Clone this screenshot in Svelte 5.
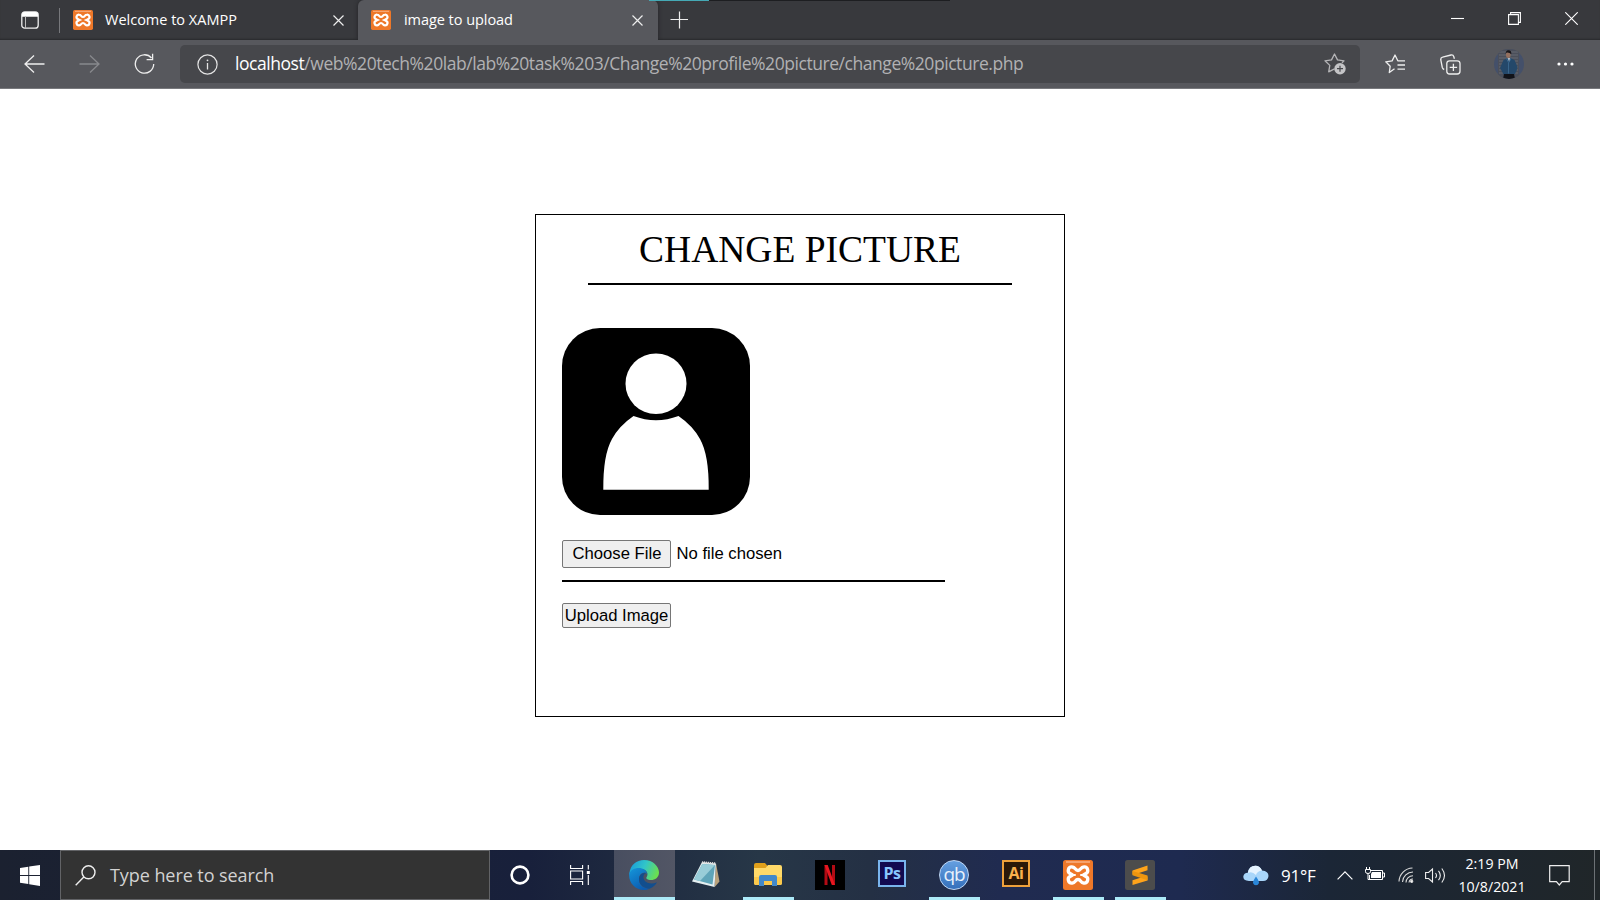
<script>
  const win = ['min', 'restore', 'close'];
  const apps = [
    { id: 'edge', state: 'active' },
    { id: 'note', state: '' },
    { id: 'files', state: 'open' },
    { id: 'netflix', state: '' },
    { id: 'ps', state: '' },
    { id: 'qb', state: 'open' },
    { id: 'ai', state: '' },
    { id: 'xampp', state: 'open' },
    { id: 'sublime', state: 'open' }
  ];
</script>

{#snippet xampp(size)}
  <svg width={size} height={size} viewBox="0 0 30 30">
    <rect width="30" height="30" rx="2.5" fill="#ee7829" />
    <path d="M3 2h24" stroke="#f9b58a" stroke-width="1.400" />
    <path d="M9.300 7C5 6.500 4 12 7 13.500L9.500 15L7 16.500C4 18 5 23.500 9.300 23C12.500 22.700 12 19.500 15 19.500C18 19.500 17.500 22.700 20.700 23C25 23.500 26 18 23 16.500L20.500 15L23 13.500C26 12 25 6.500 20.700 7C17.500 7.300 18 10.500 15 10.500C12 10.500 12.500 7.300 9.300 7Z" fill="none" stroke="#fff" stroke-width="3.300" stroke-linejoin="round" />
    <path d="M9 15h3M18 15h3" stroke="#fff" stroke-width="2" stroke-linecap="round" />
  </svg>
{/snippet}

<div class="screen">
  <header class="tabs">
    <span class="loadbar"><i></i></span>
    <svg class="tabmenu" width="18" height="18" viewBox="0 0 18 18"><rect x=".8" y=".8" width="16.400" height="16.400" rx="3" fill="none" stroke="#eee" stroke-width="1.300" /><path d="M1 5.800V3.500Q1 1 3.500 1h11Q17 1 17 3.500v2.300Z" fill="#fff" /><path d="M4.500 5v12" stroke="#bbb" /></svg>
    <span class="sep"></span>
    <div class="tab idle">
      {@render xampp(20)}
      <span class="title t1">Welcome to XAMPP</span>
      <svg class="x" width="11" height="11" viewBox="0 0 11 11"><path d="M.5.5l10 10M10.500.5l-10 10" stroke="#eee" stroke-width="1.200" /></svg>
    </div>
    <div class="tab live">
      {@render xampp(20)}
      <span class="title t2">image to upload</span>
      <svg class="x" width="11" height="11" viewBox="0 0 11 11"><path d="M.5.5l10 10M10.500.5l-10 10" stroke="#eee" stroke-width="1.200" /></svg>
    </div>
    <svg class="plus" width="18" height="18" viewBox="0 0 18 18"><path d="M9.500 .5v17M.5 8.500h18" stroke="#eee" stroke-width="1.200" /></svg>
    <div class="win">
      {#each win as w}
        <svg width="13" height="13" viewBox="0 0 13 13" fill="none" stroke="#fff" stroke-width="1.100">
          {#if w === 'min'}<path d="M0 6.500h13" />
          {:else if w === 'restore'}<path d="M.6 2.600h9.800v9.800H.6ZM2.600 2.600V.6h9.800v9.800h-2" />
          {:else}<path d="M.3.3l12.400 12.400M12.700.3L.3 12.700" />{/if}
        </svg>
      {/each}
    </div>
  </header>

  <nav class="toolbar">
    <svg class="back" width="21" height="20" viewBox="0 0 21 20"><path d="M10 1.500L1 10l9 8.500M1 10h19.500" fill="none" stroke="#eee" stroke-width="1.300" /></svg>
    <svg class="fwd" width="21" height="20" viewBox="0 0 21 20"><path d="M11 1.500l9 8.500-9 8.500M20 10H.5" fill="none" stroke="#88898d" stroke-width="1.300" /></svg>
    <svg class="reload" width="21" height="22" viewBox="0 0 21 22"><path d="M19.700 11A9.200 9.200 0 1 1 17.500 5M18.600.8v5.800h-6" fill="none" stroke="#eee" stroke-width="1.300" /></svg>
    <div class="url">
      <svg class="info" width="21" height="21" viewBox="0 0 21 21"><circle cx="10.500" cy="10.500" r="9.600" fill="none" stroke="#e5e5e5" stroke-width="1.200" /><path d="M10.500 9v6.500" stroke="#e5e5e5" stroke-width="1.300" /><circle cx="10.500" cy="6.300" r=".9" fill="#e5e5e5" /></svg>
      <span class="address"><b>localhost</b>/web%20tech%20lab/lab%20task%203/Change%20profile%20picture/change%20picture.php</span>
      <svg class="addfav" width="22" height="22" viewBox="0 0 22 22"><path d="M10.500 15.800l-5.800 3 1.100-6.400L1 7.800l6.500-.9L10.500 1l3 5.900 6.500.9-2 2" fill="none" stroke="#b5b5b7" stroke-width="1.300" stroke-linejoin="round" /><circle cx="16" cy="15.700" r="5.700" fill="#c4c4c6" /><path d="M16 12.700v6M13 15.700h6" stroke="#46474b" stroke-width="1.200" /></svg>
    </div>
    <svg class="fav" width="21" height="20" viewBox="0 0 21 20"><path d="M9.500 14.800l-5.200 3.700.9-6.300L.8 7.800l6.300-.9L10 1l2.800 5.800H20M12.500 11H20M12.500 15.200H20" fill="none" stroke="#eee" stroke-width="1.300" stroke-linejoin="round" /></svg>
    <svg class="coll" width="21" height="21" viewBox="0 0 21 21" fill="none" stroke="#eee" stroke-width="1.300"><path d="M4.200 15.500q-1.500-.4-1.900-2L.8 6q-.4-2.300 1.800-2.800L11 1q2.200-.4 2.800 1.700l.6 2" /><rect x="6.800" y="6.800" width="13.200" height="13.200" rx="2.800" /><path d="M13.400 9.700v7.400M9.700 13.400h7.400" /></svg>
    <svg class="avatar" width="30" height="30" viewBox="0 0 30 30"><defs><clipPath id="round"><circle cx="15" cy="15" r="15" /></clipPath></defs><g clip-path="url(#round)"><rect width="30" height="30" fill="#44506a" /><rect x="4" width="21" height="30" fill="#4b4f5a" /><path d="M5 3h19M5 6h19M5 9h19M5 12h19M5 15h19M5 18h19M5 21h19M5 24h19" stroke="#676a73" stroke-width="1" /><path d="M9.500 11l4-2h3l4 2 3 7-1 4-2 3.500H9.500l-1.500-3-2-3.500Z" fill="#24486a" /><path d="M12.500 9.500l2 4v11M17 9.500l-2 4" fill="none" stroke="#3f6d94" stroke-width=".8" /><path d="M13.500 9h2.800l-1.300 3.500Z" fill="#aebac6" /><path d="M10 25h10l1 5H9Z" fill="#111319" /><ellipse cx="14.300" cy="5.800" rx="2.300" ry="3.200" fill="#94705f" /><path d="M11.500 5q.3-4 3-3.800 3.200 0 2.800 4-2-2-5-1.500Z" fill="#171519" /></g></svg>
    <svg class="dots" width="17" height="4" viewBox="0 0 17 4" fill="#fff"><circle cx="2" cy="2" r="1.600" /><circle cx="8.500" cy="2" r="1.600" /><circle cx="15" cy="2" r="1.600" /></svg>
  </nav>

  <main>
    <section class="card">
      <h1>CHANGE PICTURE</h1>
      <div class="rule top"></div>
      <svg class="picture" width="188" height="187" viewBox="0 0 188 187"><rect width="188" height="187" rx="38" fill="#000" /><ellipse cx="94" cy="55.700" rx="30.500" ry="30.300" fill="#fff" /><path d="M71.500 88Q94 96.500 116.500 88Q131 98 138 111Q147 127 146.700 161.700H41.300Q41 127 50 111Q57 98 71.500 88Z" fill="#fff" /></svg>
      <div class="file"><button class="choose">Choose File</button><span>No file chosen</span></div>
      <div class="rule low"></div>
      <button class="upload">Upload Image</button>
    </section>
  </main>

  <footer>
    <div class="start"><svg width="20" height="21" viewBox="0 0 20 21" fill="#fff"><path d="M0 3l8.300-1.200v8.100H0ZM9.200 1.600L20 0v9.900H9.200ZM0 10.900h8.300V19L0 17.800ZM9.200 10.900H20V21L9.200 19.300Z" /></svg></div>
    <div class="search"><svg width="21" height="21" viewBox="0 0 21 21" fill="none" stroke="#eee" stroke-width="1.400"><circle cx="13.500" cy="7.300" r="6.500" /><path d="M8.800 12L.7 20.300" /></svg><span>Type here to search</span></div>
    <div class="sys"><svg width="20" height="20" viewBox="0 0 20 20"><circle cx="10" cy="10" r="8.400" fill="none" stroke="#fff" stroke-width="2.600" /></svg></div>
    <div class="sys view"><svg width="21" height="20" viewBox="0 0 21 20" fill="none" stroke="#fff" stroke-width="1.100"><path d="M.6 0v3.500h12V0M.6 20v-3.500h12V20M.6 6h12v8H.6ZM18.300 0v4.500M18.300 10v10" /><path d="M16.800 6h3v3h-3Z" fill="#fff" stroke="none" /></svg></div>
    {#each apps as app}
      <div class="app {app.state}">
        {#if app.id === 'edge'}
          <svg width="30" height="30" viewBox="0 0 30 30"><defs><linearGradient id="eg" x1="0" y1=".2" x2="1" y2=".5"><stop offset="0" stop-color="#199bdb" /><stop offset=".5" stop-color="#31c5c9" /><stop offset="1" stop-color="#6be04f" /></linearGradient><linearGradient id="eb" x1="0" y1="0" x2=".6" y2="1"><stop offset="0" stop-color="#1596da" /><stop offset="1" stop-color="#0b5bb0" /></linearGradient></defs><path d="M.4 13C1.500 5 7.500 0 15 0C24 0 30 6.500 30 12.500C30 17.500 26 20 22 20C18.500 20 16.700 18.600 17.500 17.300C20 14 18 9 11.500 9C6 9 2 12 .4 15Z" fill="url(#eg)" /><path d="M.2 14C1.500 10 5.500 8 9.500 8C14.500 8 17.800 10.500 18 14C16 11.500 10 13 10 19C10 25 15 29 21 28.500C19 29.500 17 30 15 30C6 30-.5 22.500.2 14Z" fill="url(#eb)" /><path d="M14 13.200C7.500 15.500 8.500 27.500 20.500 28.700C24 27.500 26.500 25 28 22.300C21 25.500 13.500 22 14.500 16Q15 13.500 17 13Q15.500 12.500 14 13.200Z" fill="#124e8e" /></svg>
        {:else if app.id === 'note'}
          <svg width="30" height="30" viewBox="0 0 30 30"><path d="M25 3.500l3.500 18-5 5.700Z" fill="#b9a27c" /><path d="M11 2l14 1.500-1.500 23.500L1 21.500Z" fill="#e4eef0" /><path d="M11.300 4L24 5l-2.500 19.500L3 19.500Z" fill="#5fa5b9" /><path d="M11.300 4L24 5 9 21 3 19.500Z" fill="#98cdd8" /><path d="M11 2.300l14 1.200" stroke="#ddd" stroke-width="2.200" stroke-dasharray="1.200 .8" /></svg>
        {:else if app.id === 'files'}
          <svg width="30" height="30" viewBox="0 0 30 30"><path d="M1 5q0-2 2-2h9l2.500 3-2 5H1Z" fill="#e0a01b" /><path d="M1 8h11.500l2.500-3H27q2 0 2 2v16q0 2-2 2H3q-2 0-2-2Z" fill="#ffda69" /><path d="M1 17h28v6q0 2-2 2H3q-2 0-2-2Z" fill="#fbc94b" /><path d="M6 26v-9q0-2 2-2h14q2 0 2 2v9h-5v-5h-8v5Z" fill="#4289ca" /></svg>
        {:else if app.id === 'netflix'}
          <svg width="30" height="30" viewBox="0 0 30 30"><path d="M0 0h30v30H0Z" fill="#000" /><path d="M11 5v20M18.500 5v20" stroke="#b20b14" stroke-width="3" /><path d="M9.500 5h3.200L20 25h-3.200Z" fill="#e81720" /></svg>
        {:else if app.id === 'xampp'}{@render xampp(30)}
        {:else if app.id === 'sublime'}
          <svg width="30" height="30" viewBox="0 0 30 30"><rect width="30" height="30" rx="2.500" fill="#4c4c4c" /><path d="M7.500 10.500L22.500 5.500v4.800L12.500 13.500L22.500 16.500v4L7.500 25v-4.800L17 17.300L7.500 14.500Z" fill="#ffa31a" /><path d="M7.500 11l15 4.500v4.800l-15-5Z" fill="#ee950f" /></svg>
        {:else}
          <span class="mark {app.id}">{app.id === 'ps' ? 'Ps' : app.id === 'ai' ? 'Ai' : 'qb'}</span>
        {/if}
      </div>
    {/each}
    <div class="tray">
      <svg class="cloud" width="26" height="21" viewBox="0 0 26 21"><path d="M6 16Q0 15.500.3 11.500Q.8 8 4.800 7.700Q6 .7 12.500.8Q17 .8 19 5.500Q25.500 6 25.500 11Q25 16 20 16Z" fill="#a9d6fa" /><path d="M5 8Q6 .7 12.500.8Q17 .8 19 5.500Q14 6 13 10Q9 6 5 8Z" fill="#e6f3ff" /><path d="M13 11.500q-3.500 5-3 6.500.7 2.300 3 2.300t3-2.300q.2-2-3-6.500Z" fill="#2a86d8" /></svg>
      <span class="temp">91°F</span>
      <svg class="chev" width="16" height="9" viewBox="0 0 16 9"><path d="M.6 8.300L8 .9l7.400 7.400" fill="none" stroke="#fff" stroke-width="1.200" /></svg>
      <svg class="batt" width="20" height="16" viewBox="0 0 20 16"><path d="M5 3.500h12.500v9H4.500V8M1.500 0v2.500M4.500 0v2.500M.5 2.500h5v2.300Q5.500 6.500 3 6.500T.5 4.800ZM3 6.500v6h2M18 6h1.500v4H18" fill="none" stroke="#fff" /><path d="M7 5h9v6H6V7Z" fill="#fff" /></svg>
      <svg class="wifi" width="16" height="16" viewBox="0 0 16 16" fill="none" stroke="#ddd" stroke-width="1.100"><path d="M1 14.500A14 14 0 0 1 14.500 1M4.500 15A10.500 10.500 0 0 1 15 5M8 15.500A7 7 0 0 1 15 8.700M11 15.500a4 4 0 0 1 4-3.500" /><circle cx="13.700" cy="14.300" r="1.100" fill="#fff" /></svg>
      <svg class="vol" width="21" height="17" viewBox="0 0 21 17" fill="none" stroke="#eee" stroke-width="1.100"><path d="M.6 5.500h3L7.500 2v13l-3.900-3.500h-3ZM10.500 6q2 2.500 0 5M13.500 3.800q3.600 4.700 0 9.400M16.800 1.500q5.400 7 0 14" /></svg>
      <div class="clock"><span>2:19 PM</span><span>10/8/2021</span></div>
      <svg class="notif" width="21" height="21" viewBox="0 0 21 21"><path d="M.7.700h19.500v16h-7L10.300 20l-2.900-3.300H.7Z" fill="none" stroke="#eee" stroke-width="1.200" /></svg>
      <span class="edgeline"></span>
    </div>
  </footer>
</div>

<style>
  :global(body) { margin: 0; overflow: hidden; }
  .screen { width: 1600px; height: 900px; display: flex; flex-direction: column; background: #fff; font-family: "Open Sans", "Noto Sans", sans-serif; white-space: nowrap; overflow: hidden; }
  svg { display: block; flex: none; }
  button { font: inherit; color: #000; box-sizing: border-box; }
  .tabs { position: relative; height: 40px; display: flex; align-items: center; background: #38393d; box-shadow: inset 0 -2px 2px -1px #29292c; color: #fff; font-size: 14.500px; flex: none; }
  .loadbar { position: absolute; left: 649px; top: 0; width: 301px; height: 1px; background: #1d1e21; z-index: 2; }
  .loadbar i { display: block; width: 60px; height: 1px; background: #45a9b5; }
  .tabmenu { margin-left: 21px; }
  .sep { width: 1px; height: 25px; margin-left: 20px; background: #77787c; }
  .tab { height: 40px; box-sizing: border-box; display: flex; align-items: center; }
  .idle { width: 298px; padding: 0 14.500px 0 13px; border-radius: 0 0 5px 0; }
  .live { width: 300px; padding: 0 15.500px 0 13px; background: #57585d; border-radius: 6px 6px 0 0; box-shadow: 0 0 4px #222327; clip-path: inset(0 -5px 0 -5px); }
  .title { flex: 1; margin-left: 12px; line-height: 20px; }
  .t2 { margin-left: 13px; letter-spacing: -.05px; }
  .x { margin-top: 1px; }
  .plus { margin-left: 12px; }
  .win { display: flex; gap: 44px; margin-left: auto; padding: 0 22px 3px 0; }
  .toolbar { height: 49px; box-sizing: border-box; display: flex; align-items: center; background: #57585d; border-bottom: 1px solid #78797d; flex: none; }
  .back { margin-left: 24px; }
  .fwd { margin-left: 34px; }
  .reload { margin-left: 34px; }
  .url { width: 1180px; height: 38px; margin-left: 25px; display: flex; align-items: center; background: #46474b; border-radius: 5px; }
  .info { margin-left: 17px; }
  .address { flex: 1; margin-left: 17px; color: #b1b1b3; font-size: 17.500px; line-height: 26px; letter-spacing: -.445px; padding-bottom: 2px; }
  .address b { font-weight: 400; color: #fff; }
  .addfav { margin-right: 14px; }
  .fav { margin-left: 25px; }
  .coll { margin-left: 34px; }
  .avatar { margin-left: 33px; }
  .dots { margin-left: 33px; }
  main { height: 761px; flex: none; display: flex; justify-content: center; align-items: flex-start; }
  .card { width: 530px; height: 503px; box-sizing: border-box; margin-top: 125px; padding: 0 26px; border: 1px solid #000; display: flex; flex-direction: column; align-items: flex-start; font-family: "Liberation Sans", sans-serif; font-size: 16.670px; }
  h1 { margin: 13px 0 0; align-self: center; font: 400 37.500px/43px "Liberation Serif", serif; color: #000; }
  .rule { height: 2px; background: #000; }
  .top { width: 424px; margin-top: 12px; align-self: center; }
  .picture { margin-top: 43px; }
  .file { display: flex; align-items: center; margin-top: 25px; }
  .file span { margin-left: 5.500px; line-height: 28px; }
  .choose, .upload { padding: 0; width: 109px; text-align: center; border: 1px solid #767676; border-radius: 2px; background: #efefef; }
  .choose { height: 28px; padding-left: 1px; }
  .low { width: 383px; margin-top: 12px; }
  .upload { height: 25px; margin-top: 21px; line-height: 22px; }
  footer { height: 50px; flex: none; display: flex; color: #fff; background: linear-gradient(90deg, #1b2130 0, #18203b 530px, #273747 760px, #243044 870px, #202b50 1000px, #1e2a50 1180px, #1b2636 1330px, #202629 1600px); }
  .start { width: 60px; display: flex; align-items: center; justify-content: center; }
  .search { width: 430px; box-sizing: border-box; display: flex; align-items: center; background: #333; border: 1px solid #626366; padding-left: 14px; color: #d2d2d2; font-size: 18px; letter-spacing: -.07px; }
  .search span { margin-left: 14px; }
  .sys { width: 60px; display: flex; align-items: center; justify-content: center; }
  .view { width: 64px; justify-content: flex-start; padding-left: 20px; box-sizing: border-box; }
  .app { position: relative; width: 62px; box-sizing: border-box; padding-right: 2px; display: flex; align-items: center; justify-content: center; flex: none; }
  .app.active { width: 61px; margin-right: 1px; background: linear-gradient(90deg, #484e60, #525665); }
  .app.open::after, .app.active::after { content: ""; position: absolute; left: 5px; right: 6px; bottom: 0; height: 3px; background: #aceaf8; }
  .app.active::after { left: 0; right: 0; }
  .mark { box-sizing: border-box; width: 28px; height: 27px; margin-top: -3px; border: 2px solid #79b4ed; background: #120a50; color: #89c6ff; font: 700 16px/22px "Open Sans", sans-serif; text-align: center; letter-spacing: -.4px; }
  .mark.ai { border-color: #efa13b; background: #2b1808; color: #fab04d; }
  .mark.qb { width: 30px; height: 30px; margin: 0; border: 1px solid #bed7f6; border-radius: 50%; background: linear-gradient(#659fe0, #3570bb); color: #e8f1fb; font: 400 19px/26px "Open Sans", sans-serif; letter-spacing: -1px; }
  .tray { flex: 1; display: flex; align-items: center; }
  .cloud { margin-left: 71px; }
  .temp { width: 36px; margin-left: 12px; padding-top: 2px; font-size: 17px; line-height: 24px; letter-spacing: -.2px; }
  .chev { margin-left: 20px; }
  .batt { margin-left: 12px; }
  .wifi { margin-left: 13px; }
  .vol { margin-left: 11px; }
  .clock { width: 80px; margin-left: 6px; display: flex; flex-direction: column; text-align: center; font-size: 14.200px; line-height: 23px; }
  .notif { margin-left: 17px; }
  .edgeline { width: 1px; height: 50px; margin: 0 5px 0 auto; background: #6c7175; }
</style>
